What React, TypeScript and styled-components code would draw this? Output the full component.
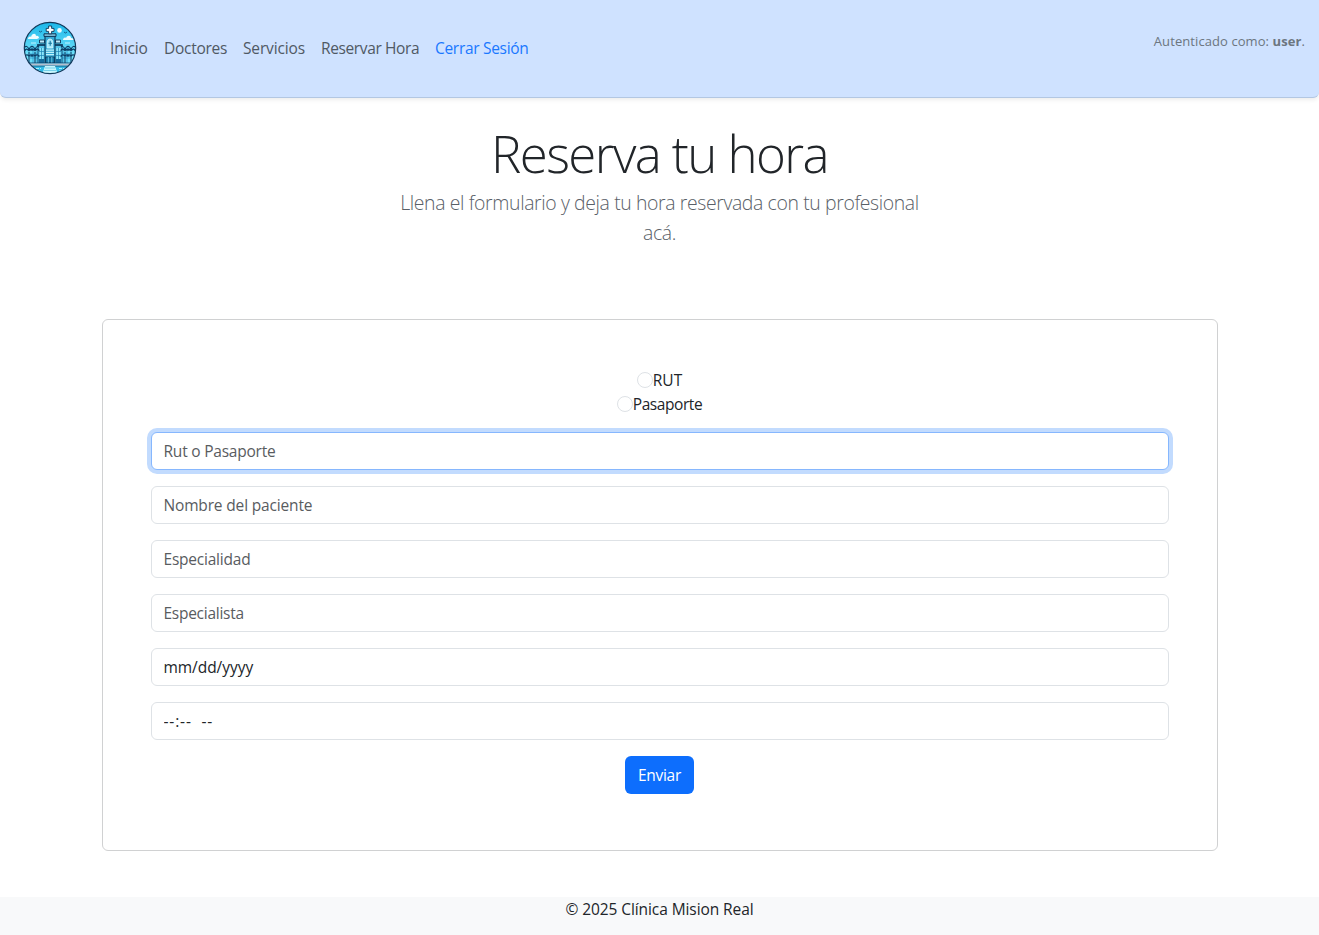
import React from "react";
import styled, { createGlobalStyle } from "styled-components";

const GlobalStyle = createGlobalStyle`
  *, *::before, *::after { box-sizing: border-box; }
  body {
    margin: 0;
    background: #fff;
    color: #212529;
    font-family: "Segoe UI", "Open Sans", "Noto Sans", sans-serif;
    font-size: 15.5px;
    line-height: 24px;
  }
`;

const Page = styled.div`
  display: flex;
  flex-direction: column;
  min-height: 935px;
`;

const Header = styled.header`
  display: flex;
  align-items: center;
  height: 98px;
  padding: 0 14px 0 23px;
  background: #cfe2ff;
  border: solid #b3c7e2;
  border-width: 0 0 1px;
  border-radius: 0 0 6px 6px;
  box-shadow: 0 2px 4px rgba(0, 0, 0, 0.075);
`;

const Logo = styled.svg`
  flex: none;
  display: block;
  width: 54px;
  height: 54px;
  margin: 0 25px 1px 0;
`;

const Nav = styled.nav`
  display: flex;
`;

const NavLink = styled.a<{ $width: number; $spacing: number; $active?: boolean }>`
  width: ${(p) => p.$width}px;
  padding: 7px 8px 9px;
  white-space: nowrap;
  letter-spacing: ${(p) => p.$spacing}px;
  color: ${(p) => (p.$active ? "#1a78ff" : "#4f5964")};
`;

const Session = styled.p`
  align-self: flex-start;
  margin: 30px 0 0 auto;
  font-size: 13px;
  line-height: 22px;
  letter-spacing: 0.08px;
  color: #6c7680;
  white-space: nowrap;
`;

const Intro = styled.section`
  display: flex;
  flex-direction: column;
  align-items: center;
  padding-top: 22px;
  text-align: center;
`;

const Title = styled.h1`
  margin: 0;
  font-size: 51px;
  font-weight: 300;
  line-height: 67px;
  letter-spacing: -1.6px;
`;

const Lead = styled.p`
  width: 540px;
  margin: 1px 0 0;
  font-size: 19.4px;
  font-weight: 300;
  line-height: 30px;
  letter-spacing: -0.37px;
  color: #596067;
`;

const Card = styled.form`
  display: flex;
  flex-direction: column;
  align-items: center;
  width: 1116px;
  height: 532px;
  margin: 71px auto 0;
  padding: 48px;
  border: 1px solid #d0d1d2;
  border-radius: 6px;
`;

const Choice = styled.label<{ $spacing?: number }>`
  display: flex;
  align-items: center;
  height: 24px;
  letter-spacing: ${(p) => p.$spacing ?? 0}px;
`;

const Radio = styled.input`
  appearance: none;
  width: 16px;
  height: 16px;
  margin: 0;
  border: 1px solid #dee2e6;
  border-radius: 50%;
`;

const Field = styled.input<{ $focused?: boolean; $spacing?: number }>`
  flex: none;
  width: 100%;
  height: 38px;
  margin-top: 16px;
  padding: 6px 12px;
  border: 1px solid ${(p) => (p.$focused ? "#86b7fe" : "#dee2e6")};
  border-radius: 6px;
  outline: 0;
  box-shadow: ${(p) => (p.$focused ? "0 0 0 4px #c2dbfe" : "none")};
  background: #fff;
  color: #212529;
  font: inherit;
  letter-spacing: ${(p) => p.$spacing ?? -0.22}px;

  &::placeholder {
    color: #595c5f;
    opacity: 1;
  }
`;

const Submit = styled.button`
  width: 69px;
  height: 38px;
  margin-top: 16px;
  padding: 0;
  border: 0;
  border-radius: 6px;
  background: #0d6efd;
  color: #fff;
  font: inherit;
  letter-spacing: -0.3px;
`;

const Footer = styled.footer`
  height: 38px;
  margin-top: auto;
  background: #f8f9fa;
  text-align: center;
  letter-spacing: -0.08px;
`;

const links = [
  { label: "Inicio", width: 54, spacing: -0.1 },
  { label: "Doctores", width: 79, spacing: -0.28 },
  { label: "Servicios", width: 78, spacing: -0.15 },
  { label: "Reservar Hora", width: 114, spacing: -0.38 },
  { label: "Cerrar Sesión", width: 110, spacing: -0.3, active: true },
];

function Palm({ x }: { x: number }) {
  return (
    <g transform={`translate(${x} 0)`}>
      <path d="M0 31v11" stroke="#0b3d66" strokeWidth="1.1" />
      <path
        d="M0 30c-2-3-4-2-4 0M0 30c2-3 4-2 4 0M0 29c-1-4-3-4-4-3M0 29c1-4 3-4 4-3M0 35c-2-2-4-1-4 1M0 35c2-2 4-1 4 1"
        fill="none"
        stroke="#0b3d66"
        strokeWidth="1.1"
      />
    </g>
  );
}

function ClinicLogo() {
  return (
    <Logo viewBox="0 0 54 54" role="img" aria-label="Clínica Mision Real">
      <defs>
        <clipPath id="disc"><circle cx="27" cy="27" r="25.6" /></clipPath>
        <linearGradient id="sky" x1="0" y1="0" x2="0" y2="1">
          <stop offset="0" stopColor="#16b5e9" />
          <stop offset="0.65" stopColor="#74e2fa" />
        </linearGradient>
      </defs>
      <g clipPath="url(#disc)">
        <path d="M0 0h54v54H0z" fill="url(#sky)" />
        <circle cx="36.5" cy="9.4" r="2.3" fill="#eefcff" />
        <path d="M5 18c0-2 2-3 3-2 1-4 5-4 5-1 2-1 3 1 3 2l-2 1zM40 19c0-2 2-3 3-2 1-3 5-3 5 0 2 0 3 1 3 2z" fill="#eefcff" />
        <path d="M16 10l1.5 1L19 10M41 11l1.5 1L44 11" fill="none" stroke="#17618b" strokeWidth="1" />
        <path d="M8 22h5M42 22h5" stroke="#bff3ff" />
        {/* side wings */}
        <path d="M7 28h40v15H7z" fill="#6adcf7" />
        <path d="M7 28h8M39 28h8M7 33h40M7 37h40M10 29v13M14 29v13M40 29v13M44 29v13" stroke="#2294c8" strokeWidth="0.7" />
        <path d="M15 24h24v19H15z" fill="#53c5e9" stroke="#0b3d66" strokeWidth="0.8" />
        <path d="M14 24h26" stroke="#0b3558" strokeWidth="1.4" />
        <path d="M16.5 19h5v3h-5zM32.5 19h5v3h-5z" fill="#b9eafa" stroke="#0b3558" strokeWidth="0.9" />
        <path d="M16.5 27h4v11h-4zM33.5 27h4v11h-4z" fill="#8ee5f9" />
        <path d="M18.5 27v11M35.5 27v11M16 30.5h5M16 34.5h5M33 30.5h5M33 34.5h5" stroke="#1981b3" strokeWidth="0.7" />
        <path d="M16 38h5v4h-5zM33 38h5v4h-5z" fill="#146d9d" />
        {/* central tower */}
        <path d="M22 14h10v28H22z" fill="#36a9d4" stroke="#0b3558" strokeWidth="1.1" />
        <path d="M21 12.8h12v2.6H21z" fill="#83c6e2" stroke="#0b3558" />
        <path d="M24.2 27v-6c0-4 5.6-4 5.6 0v6z" fill="#a5e9fb" stroke="#e2faff" strokeWidth="0.7" />
        <path d="M27.2 19.8v5M25.4 22.2H29" stroke="#14749f" strokeWidth="1.1" />
        <path d="M23 29.2h8M23 31.4h8M23 33.6h8" stroke="#bdf1fb" strokeWidth="1.2" />
        <path d="M22.5 36h9v6h-9z" fill="#1177a5" stroke="#0b3558" strokeWidth="0.8" />
        <path d="M25.3 36v6M28.8 36v6" stroke="#82d9f2" strokeWidth="0.8" />
        <path d="M25.6 5h3v2.4H31v3h-2.4v2.4h-3v-2.4h-2.4v-3h2.4z" fill="#fff" stroke="#0b3558" strokeWidth="0.9" />
        <Palm x={6} />
        <Palm x={12} />
        <Palm x={42} />
        <Palm x={48} />
        <path d="M0 42h54v12H0z" fill="#31bce7" />
        <path d="M1 42h52M3 45h48" stroke="#0b3d66" strokeWidth="0.8" />
        <path d="M2 43.5h50" stroke="#b3bfce" strokeWidth="2" />
        <path d="M22 45h10l3 9H19z" fill="#c6f6fe" />
        <path d="M22 47h10M21 49.5h12" stroke="#52c0df" strokeWidth="0.7" />
        <path d="M9 47.5h9M36 47.5h9M14 50h4M36 50h4" stroke="#a8edfb" strokeDasharray="3 1" />
      </g>
      <circle cx="27" cy="27" r="25.7" fill="none" stroke="#123a5c" strokeWidth="1.2" />
    </Logo>
  );
}

export default function App() {
  return (
    <Page>
      <GlobalStyle />
      <Header>
        <ClinicLogo />
        <Nav>
          {links.map((l) => (
            <NavLink key={l.label} $width={l.width} $spacing={l.spacing} $active={l.active}>
              {l.label}
            </NavLink>
          ))}
        </Nav>
        <Session>
          Autenticado como: <b>user</b>.
        </Session>
      </Header>
      <Intro>
        <Title>Reserva tu hora</Title>
        <Lead>Llena el formulario y deja tu hora reservada con tu profesional acá.</Lead>
      </Intro>
      <Card>
        <Choice><Radio type="radio" name="document" />RUT</Choice>
        <Choice $spacing={-0.42}><Radio type="radio" name="document" />Pasaporte</Choice>
        <Field placeholder="Rut o Pasaporte" $focused />
        <Field placeholder="Nombre del paciente" $spacing={-0.16} />
        <Field placeholder="Especialidad" />
        <Field placeholder="Especialista" $spacing={-0.27} />
        <Field defaultValue="mm/dd/yyyy" $spacing={-0.05} />
        <Field defaultValue="--:--  --" $spacing={0.85} />
        <Submit type="button">Enviar</Submit>
      </Card>
      <Footer>© 2025 Clínica Mision Real</Footer>
    </Page>
  );
}
